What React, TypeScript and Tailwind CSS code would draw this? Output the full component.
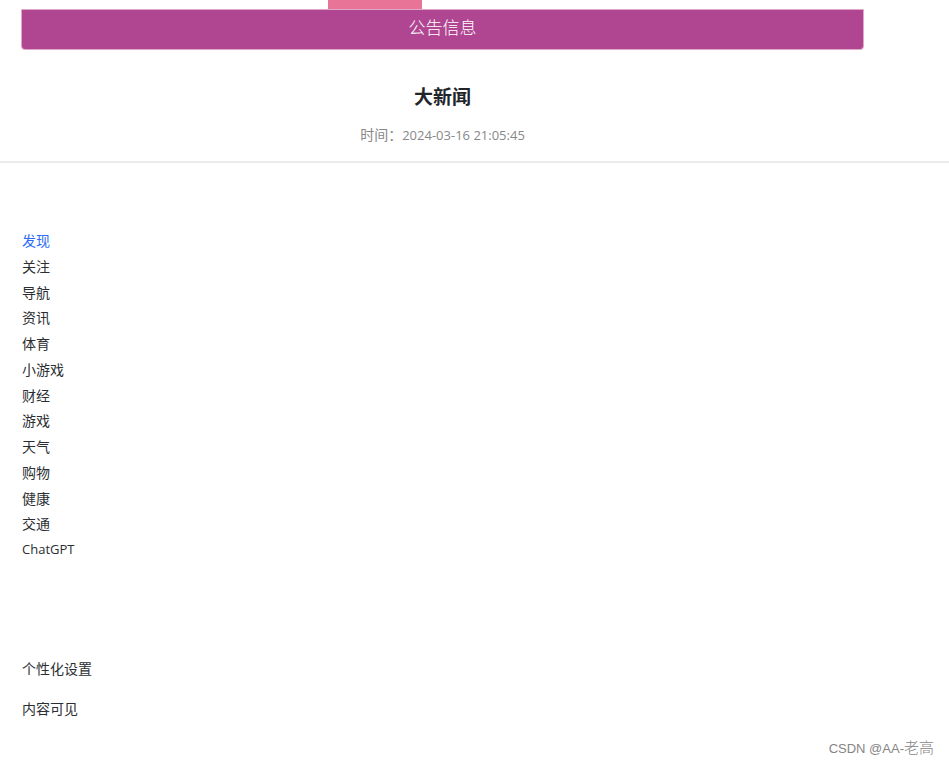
const CHANNELS = ['发现', '关注', '导航', '资讯', '体育', '小游戏', '财经', '游戏', '天气', '购物', '健康', '交通']

const SETTINGS = ['个性化设置', '内容可见']

export default function App() {
  return (
    <div className="min-h-screen bg-white font-['Open_Sans','Noto_Sans_CJK_SC',sans-serif] text-sm text-[#2b2f33]">
      {/* ── Notice banner ── */}
      <header className="pl-[21px] pr-[85px]">
        <div className="flex justify-center pr-[136px]">
          <div className="h-[9px] w-[94px] bg-[#e87497]" />
        </div>
        <div className="rounded-b border border-[#dfa9c6] bg-[#b04592] pb-[9px] pt-1 text-center font-['Noto_Sans_CJK_SC',sans-serif] text-[17px] font-light leading-[26px] text-white">
          公告信息
        </div>
      </header>

      {/* ── Article heading ── */}
      <section className="border-b-2 border-[#ebebeb] pb-[15px] pl-[21px] pr-[85px] pt-8 text-center">
        <h1 className="font-['Noto_Sans_CJK_SC',sans-serif] text-[19px] font-bold leading-7 text-[#212529]">大新闻</h1>
        <p className="mt-[14px] leading-[22px] text-[#888888]">
          时间：<time className="text-[13px]">2024-03-16 21:05:45</time>
        </p>
      </section>

      {/* ── Article body ── */}
      <main className="pl-[22px] pt-[65px]">
        <ul className="grid h-[335px] auto-rows-fr leading-[25px]">
          {CHANNELS.map((name, i) => (
            <li key={name} className={i === 0 ? 'text-[#2b6cf5]' : ''}>
              {name}
            </li>
          ))}
          <li className="text-[13px]">ChatGPT</li>
        </ul>
        <div className="mt-[93px] flex flex-col gap-[14px]">
          {SETTINGS.map(name => (
            <p key={name} className="leading-[26px]">{name}</p>
          ))}
        </div>
      </main>

      <footer className="pr-[15px] pt-[14px] text-right font-['Liberation_Sans','Noto_Sans_CJK_SC',sans-serif] text-[13px] leading-6 text-[#858585]">
        CSDN @AA-<span className="text-[15px] font-light">老高</span>
      </footer>
    </div>
  )
}
